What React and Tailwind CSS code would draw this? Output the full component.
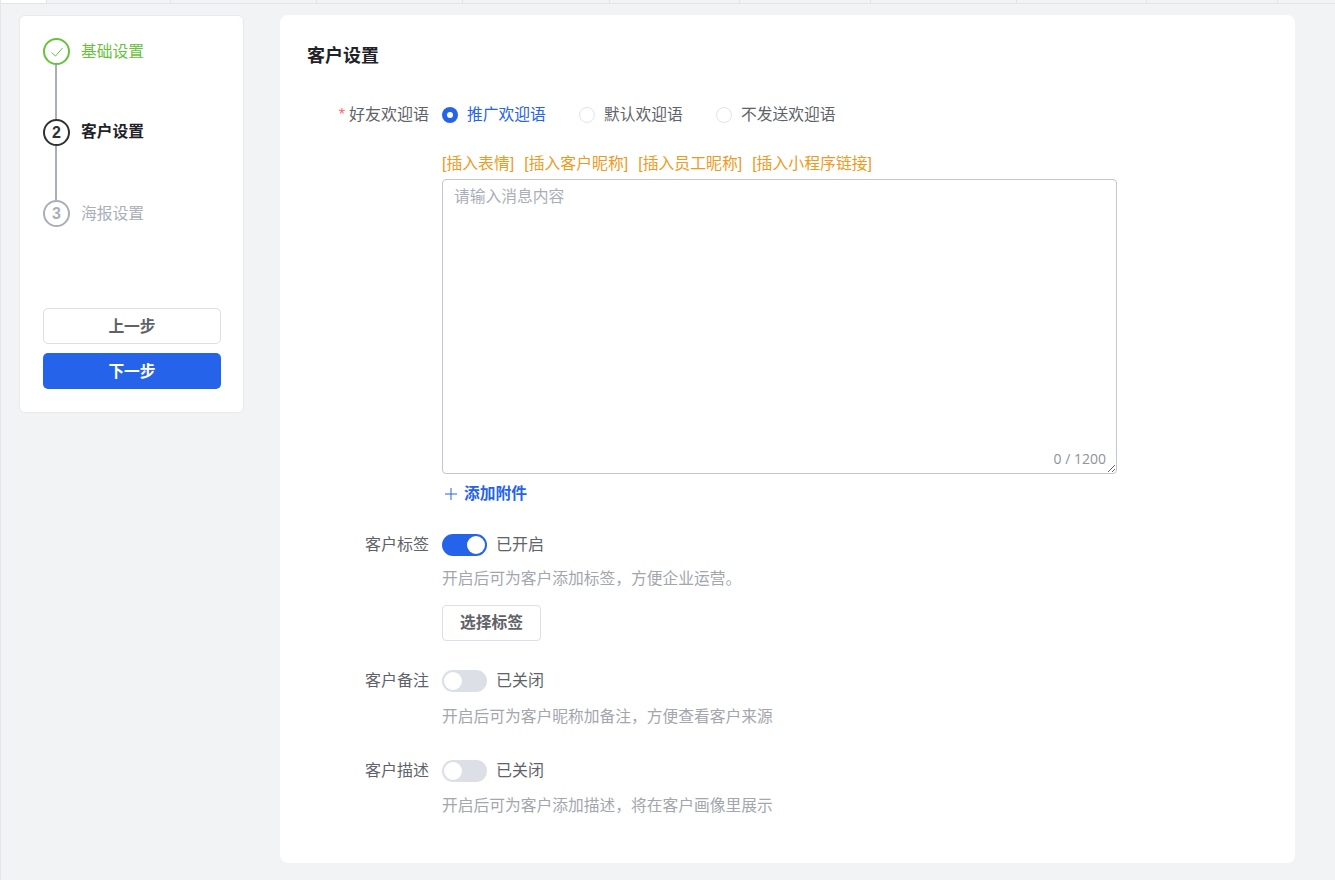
import React from "react";

function Step({ circle, label, labelClass, line }) {
  return (
    <div className="flex flex-col">
      <div className="flex gap-[11px]">
        <div className="flex flex-col items-center w-[27px]">
          {circle}
          {line && <div className="w-[2px] h-[54px] mr-[1px] bg-[#a9aeb8]" />}
        </div>
        <div className={`leading-[26px] text-[15.75px] ${labelClass}`}>{label}</div>
      </div>
    </div>
  );
}

function Toggle({ on }) {
  return (
    <div className={`w-[45px] h-[22px] rounded-full flex items-center px-[2px] ${on ? "bg-[#2563eb] justify-end" : "bg-[#dcdfe6] justify-start"}`}>
      <div className="w-[18px] h-[18px] rounded-full bg-white" />
    </div>
  );
}

function Radio({ on, label, className }) {
  return (
    <div className={`flex items-center gap-[9px] ${className}`}>
      {on ? (
        <div className="w-[16px] h-[16px] rounded-full bg-[#2563eb] flex items-center justify-center">
          <div className="w-[6px] h-[6px] rounded-full bg-white" />
        </div>
      ) : (
        <div className="w-[16px] h-[16px] rounded-full border border-[#e2e4ec] bg-white" />
      )}
      <span className={on ? "text-[#2563eb]" : "text-[#5f6369]"}>{label}</span>
    </div>
  );
}

function Row({ label, required, children, className }) {
  return (
    <div className={`flex ${className || ""}`}>
      <div className="w-[122px] shrink-0 text-right text-[#5f6369] text-[16px] leading-[24px]">
        {required && <span className="text-[#f56c6c] mr-[4px]">*</span>}
        {label}
      </div>
      <div className="ml-[13px] flex-1 min-w-0">{children}</div>
    </div>
  );
}

function SwitchLine({ on, text }) {
  return (
    <div className="flex items-center gap-[9px] h-[24px]">
      <Toggle on={on} />
      <span className="text-[#5f6369] text-[16px]">{text}</span>
    </div>
  );
}

export default function App() {
  const tabs = [46, 124, 146, 146, 147, 130, 131, 146, 130, 131];
  return (
    <div className="w-[1335px] h-[880px] bg-[#f2f3f5] overflow-hidden text-[15.75px] border-l border-[#e5e6eb] font-['Liberation_Sans','Noto_Sans_CJK_SC',sans-serif]">
      <div className="flex h-[4px] border-b border-[#e2e4e8]">
        {tabs.map((w, i) => (
          <div key={i} style={{ width: w }} className={`h-[3px] shrink-0 border-r border-[#e2e4e8] ${i === 0 ? "bg-white" : ""}`} />
        ))}
      </div>
      <div className="flex items-start pt-[11px] pl-[18px]">
        <div className="w-[225px] h-[398px] shrink-0 bg-white rounded-[6px] border border-[#e8e9ee] pt-[22px] px-[23px]">
          <Step
            line
            label="基础设置"
            labelClass="mt-[1px] text-[#67c23a]"
            circle={
              <div className="w-[27px] h-[27px] rounded-full border-2 border-[#67c23a] flex items-center justify-center">
                <svg width="14" height="14" viewBox="0 0 14 14" fill="none" stroke="#67c23a" strokeWidth="1">
                  <path d="M1.5 7.5 L5.5 11 L12.5 3" />
                </svg>
              </div>
            }
          />
          <Step
            line
            label="客户设置"
            labelClass="text-[#1f2329] font-bold"
            circle={
              <div className="w-[27px] h-[27px] rounded-full border-2 border-[#303133] flex items-center justify-center text-[#303133] font-bold text-[16px]">
                2
              </div>
            }
          />
          <Step
            label="海报设置"
            labelClass="mt-[1px] text-[#a9aeb8]"
            circle={
              <div className="w-[27px] h-[27px] rounded-full border-2 border-[#a9aeb8] flex items-center justify-center text-[#a9aeb8] font-bold text-[16px]">
                3
              </div>
            }
          />
          <div className="mt-[81px] flex flex-col gap-[9px]">
            <button className="w-[178px] h-[36px] pt-[1px] rounded-[5px] border border-[#dcdfe6] bg-white text-[#5f6369] font-bold text-[15.75px]">上一步</button>
            <button className="w-[178px] h-[36px] pt-[1px] rounded-[5px] bg-[#2563eb] text-white font-bold text-[15.75px]">下一步</button>
          </div>
        </div>
        <div className="ml-[36px] w-[1015px] h-[848px] shrink-0 bg-white rounded-[8px] px-[27px] pt-[29px]">
          <div className="text-[18px] font-bold text-[#1f2329] leading-[24px]">客户设置</div>
          <Row label="好友欢迎语" required className="mt-[35px]">
            <div className="flex h-[24px]">
              <Radio on label="推广欢迎语" className="w-[137px]" />
              <Radio label="默认欢迎语" className="w-[137px]" />
              <Radio label="不发送欢迎语" />
            </div>
            <div className="mt-[25px] flex gap-[10px] text-[#ee9a22] leading-[24px] text-[15.875px]">
              <span>[插入表情]</span>
              <span>[插入客户昵称]</span>
              <span>[插入员工昵称]</span>
              <span>[插入小程序链接]</span>
            </div>
            <div className="relative mt-[3px] w-[675px] h-[295px]">
              <textarea
                placeholder="请输入消息内容"
                className="block w-full h-full rounded-[4px] border border-[#c4c6cf] px-[11px] py-[5px] text-[15.75px] leading-[24px] placeholder:text-[#a9aeb8] outline-none"
              />
              <span className="absolute right-[11px] bottom-[5px] text-[14px] leading-[20px] text-[#909399] font-['Open_Sans',sans-serif]">0 / 1200</span>
            </div>
            <div className="mt-[8px] flex items-center gap-[5px] text-[#2563eb] font-bold h-[24px]">
              <svg width="16" height="16" viewBox="0 0 16 16" fill="none" stroke="#2563eb" strokeWidth="1" className="ml-[1px]">
                <path d="M8 2 V14 M2 8 H14" />
              </svg>
              添加附件
            </div>
          </Row>
          <Row label="客户标签" className="mt-[27px]">
            <SwitchLine on text="已开启" />
            <div className="mt-[10px] text-[#a3a6ad] leading-[24px]">开启后可为客户添加标签，方便企业运营。</div>
            <button className="mt-[14px] block w-[99px] h-[36px] rounded-[4px] border border-[#dcdfe6] bg-white text-[#5f6369] font-bold text-[15.75px]">选择标签</button>
          </Row>
          <Row label="客户备注" className="mt-[28px]">
            <SwitchLine text="已关闭" />
            <div className="mt-[12px] text-[#a3a6ad] leading-[24px]">开启后可为客户昵称加备注，方便查看客户来源</div>
          </Row>
          <Row label="客户描述" className="mt-[30px]">
            <SwitchLine text="已关闭" />
            <div className="mt-[11px] text-[#a3a6ad] leading-[24px]">开启后可为客户添加描述，将在客户画像里展示</div>
          </Row>
        </div>
      </div>
    </div>
  );
}
